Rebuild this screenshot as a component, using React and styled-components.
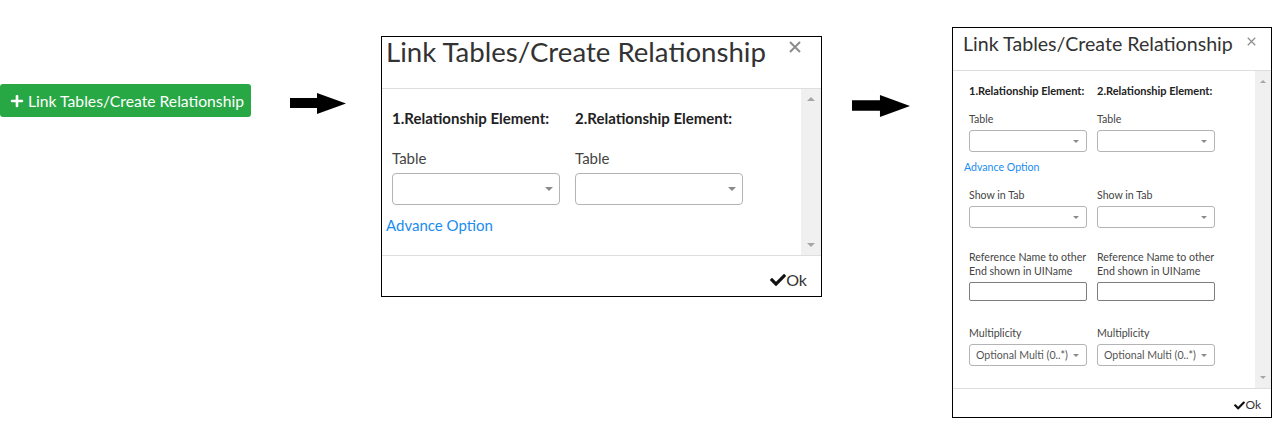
import React from 'react';
import styled, { createGlobalStyle, ThemeProvider } from 'styled-components';
import { FaPlus, FaCheck } from 'react-icons/fa';

const Global = createGlobalStyle`
  *, *::before, *::after { box-sizing: border-box; }
  html, body { margin: 0; padding: 0; background: #fff; }
  body { font-family: Lato, "Open Sans", sans-serif; }
`;

const big = {
  w: 441, headerH: 52, titleSize: 27.6, titleTop: 1, titleLeft: 4,
  closeW: 12, closeStroke: 2, closeTop: 3, closeRight: 20,
  bodyH: 167, scrollW: 20, scrollPad: 8, scrollArrow: 4,
  padL: 10, padT: 19, colW: 183, selW: 168, selH: 32, inputH: 20, radius: 4,
  headSize: 15, lh: 20, labelSize: 15, caret: 4, caretRight: 6, textLeft: 6,
  linkLeft: -6, footerH: 40, okSize: 16, okTop: 16, okRight: 14, checkSize: 16,
};

const small = {
  w: 320, headerH: 43, titleSize: 19.6, titleTop: 6, titleLeft: 10,
  closeW: 9, closeStroke: 1.6, closeTop: 3, closeRight: 15,
  bodyH: 318, scrollW: 16, scrollPad: 9, scrollArrow: 3,
  padL: 16, padT: 13, colW: 128, selW: 118, selH: 22, inputH: 19, radius: 3,
  headSize: 11, lh: 14, labelSize: 10.6, caret: 3, caretRight: 7, textLeft: 6,
  linkLeft: -5, footerH: 28, okSize: 12, okTop: 10, okRight: 10, checkSize: 11,
};

const Canvas = styled.div`
  display: flex;
  align-items: flex-start;
  width: 1283px;
  height: 427px;
  overflow: hidden;
`;

const AddButton = styled.button`
  flex: none;
  margin-top: 84px;
  display: flex;
  align-items: center;
  gap: 4px;
  width: 251px;
  height: 33px;
  padding: 0 0 0 10px;
  background: #28a745;
  color: #fff;
  border: none;
  border-radius: 3px;
  font-family: inherit;
  font-size: 15.7px;
  white-space: nowrap;
`;

const Arrow = styled.svg`
  flex: none;
  display: block;
  margin-left: ${p => p.$ml}px;
  margin-top: ${p => p.$mt}px;
`;

const ModalBox = styled.div`
  flex: none;
  margin-left: ${p => p.$ml}px;
  margin-top: ${p => p.$mt}px;
  width: ${p => p.theme.w}px;
  border: 1px solid #000;
  background: #fff;
  display: flex;
  flex-direction: column;
`;

const Header = styled.div`
  height: ${p => p.theme.headerH}px;
  display: flex;
  align-items: flex-start;
  justify-content: space-between;
  padding: ${p => p.theme.titleTop}px ${p => p.theme.closeRight}px 0 ${p => p.theme.titleLeft}px;
  border-bottom: 1px solid #dedede;
`;

const Title = styled.h4`
  margin: 0;
  font-weight: 400;
  font-size: ${p => p.theme.titleSize}px;
  line-height: 1;
  color: #333;
  white-space: nowrap;
`;

const CloseIcon = styled.svg`
  display: block;
  margin-top: ${p => p.theme.closeTop}px;
  width: ${p => p.theme.closeW}px;
  height: ${p => p.theme.closeW}px;
  stroke: #8c8c8c;
  stroke-width: ${p => p.theme.closeStroke};
`;

const Body = styled.div`
  height: ${p => p.theme.bodyH}px;
  display: flex;
  border-bottom: 1px solid #dedede;
`;

const Content = styled.div`
  flex: 1;
  padding: ${p => p.theme.padT}px 0 0 ${p => p.theme.padL}px;
`;

const Scrollbar = styled.div`
  width: ${p => p.theme.scrollW}px;
  background: #f0f0f0;
  display: flex;
  flex-direction: column;
  align-items: center;
  justify-content: space-between;
  padding: ${p => p.theme.scrollPad}px 0;
`;

const ScrollArrow = styled.span`
  width: 0;
  height: 0;
  border-left: ${p => p.theme.scrollArrow}px solid transparent;
  border-right: ${p => p.theme.scrollArrow}px solid transparent;
  ${p => (p.$up ? 'border-bottom' : 'border-top')}: ${p => p.theme.scrollArrow}px solid #a6a6a6;
`;

const Row = styled.div`
  display: grid;
  grid-template-columns: ${p => p.theme.colW}px ${p => p.theme.colW}px;
  margin-top: ${p => p.$mt || 0}px;
`;

const Heading = styled.div`
  font-weight: 700;
  font-size: ${p => p.theme.headSize}px;
  line-height: ${p => p.theme.lh}px;
  color: #222;
  white-space: nowrap;
`;

const Field = styled.div`
  display: flex;
  flex-direction: column;
`;

const Label = styled.label`
  font-size: ${p => p.theme.labelSize}px;
  line-height: ${p => p.theme.lh}px;
  color: #444;
  white-space: nowrap;
  margin-bottom: ${p => p.$gap}px;
`;

const Select = styled.div`
  width: ${p => p.theme.selW}px;
  height: ${p => p.theme.selH}px;
  border: 1px solid #b4b4b4;
  border-radius: ${p => p.theme.radius}px;
  display: flex;
  align-items: center;
  justify-content: space-between;
  padding: 0 ${p => p.theme.caretRight}px 0 ${p => p.theme.textLeft}px;
  font-size: ${p => p.theme.labelSize}px;
  color: #555;
  white-space: nowrap;
`;

const Caret = styled.span`
  width: 0;
  height: 0;
  border-left: ${p => p.theme.caret}px solid transparent;
  border-right: ${p => p.theme.caret}px solid transparent;
  border-top: ${p => p.theme.caret}px solid #8a8a8a;
`;

const TextInput = styled.div`
  width: ${p => p.theme.selW}px;
  height: ${p => p.theme.inputH}px;
  border: 1px solid #7d7d7d;
  border-radius: 2px;
`;

const Link = styled.a`
  display: block;
  margin-left: ${p => p.theme.linkLeft}px;
  margin-top: ${p => p.$mt}px;
  font-size: ${p => p.theme.labelSize}px;
  line-height: ${p => p.theme.lh}px;
  color: #1a8cf0;
  text-decoration: none;
`;

const Footer = styled.div`
  height: ${p => p.theme.footerH}px;
  display: flex;
  justify-content: flex-end;
  align-items: flex-start;
  padding: ${p => p.theme.okTop}px ${p => p.theme.okRight}px 0 0;
`;

const OkButton = styled.span`
  display: flex;
  align-items: center;
  font-size: ${p => p.theme.okSize}px;
  line-height: 1;
  color: #333;
  svg { width: ${p => p.theme.checkSize}px; height: ${p => p.theme.checkSize}px; color: #111; }
`;

const ArrowIcon = ({ w, h, ml, mt }) => (
  <Arrow width={w} height={h} viewBox="0 0 56 21" preserveAspectRatio="none" $ml={ml} $mt={mt}>
    <polygon points="0,5 27,5 27,0 56,10.5 27,21 27,15 0,15" fill="#000" />
  </Arrow>
);

const SelectBox = ({ children }) => (
  <Select>
    <span>{children}</span>
    <Caret />
  </Select>
);

const SelectField = ({ label, gap, value }) => (
  <Field>
    <Label $gap={gap}>{label}</Label>
    <SelectBox>{value}</SelectBox>
  </Field>
);

const Modal = ({ theme, ml, mt, children }) => (
  <ThemeProvider theme={theme}>
    <ModalBox $ml={ml} $mt={mt}>
      <Header>
        <Title>Link Tables/Create Relationship</Title>
        <CloseIcon viewBox="0 0 12 12">
          <path d="M1 1 L11 11 M11 1 L1 11" />
        </CloseIcon>
      </Header>
      <Body>
        <Content>{children}</Content>
        <Scrollbar>
          <ScrollArrow $up />
          <ScrollArrow />
        </Scrollbar>
      </Body>
      <Footer>
        <OkButton>
          <FaCheck />
          Ok
        </OkButton>
      </Footer>
    </ModalBox>
  </ThemeProvider>
);

const Headings = () => (
  <Row>
    <Heading>1.Relationship Element:</Heading>
    <Heading>2.Relationship Element:</Heading>
  </Row>
);

export default function App() {
  return (
    <>
      <Global />
      <Canvas>
        <AddButton>
          <FaPlus size={14} />
          Link Tables/Create Relationship
        </AddButton>
        <ArrowIcon w={56} h={21} ml={39} mt={93} />
        <Modal theme={big} ml={35} mt={36}>
          <Headings />
          <Row $mt={20}>
            <SelectField label="Table" gap={5} />
            <SelectField label="Table" gap={5} />
          </Row>
          <Link $mt={10}>Advance Option</Link>
        </Modal>
        <ArrowIcon w={58} h={22} ml={30} mt={95} />
        <Modal theme={small} ml={42} mt={27}>
          <Headings />
          <Row $mt={14}>
            <SelectField label="Table" gap={4} />
            <SelectField label="Table" gap={4} />
          </Row>
          <Link $mt={8}>Advance Option</Link>
          <Row $mt={14}>
            <SelectField label="Show in Tab" gap={4} />
            <SelectField label="Show in Tab" gap={4} />
          </Row>
          <Row $mt={22}>
            <Field>
              <Label $gap={4}>Reference Name to other<br />End shown in UIName</Label>
              <TextInput />
            </Field>
            <Field>
              <Label $gap={4}>Reference Name to other<br />End shown in UIName</Label>
              <TextInput />
            </Field>
          </Row>
          <Row $mt={25}>
            <SelectField label="Multiplicity" gap={4} value="Optional Multi (0..*)" />
            <SelectField label="Multiplicity" gap={4} value="Optional Multi (0..*)" />
          </Row>
        </Modal>
      </Canvas>
    </>
  );
}
